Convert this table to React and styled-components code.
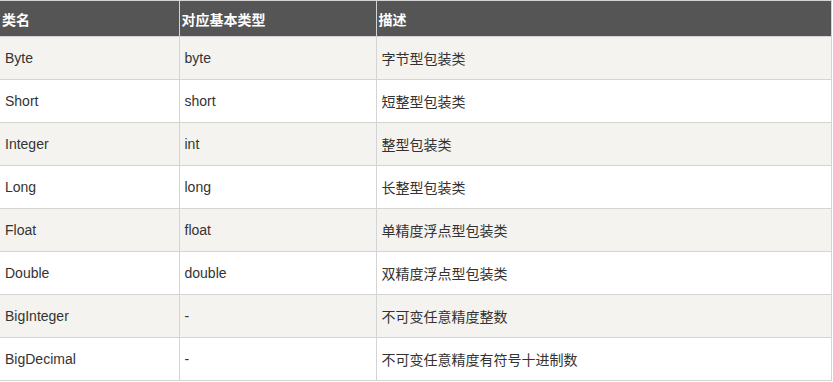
import React from "react";
import styled, { createGlobalStyle } from "styled-components";

const Global = createGlobalStyle`
  html, body { margin: 0; padding: 0; background: #fff; }
  body { font-family: "Liberation Sans", Arial, "Noto Sans CJK SC", sans-serif; }
`;

const Table = styled.table`
  border-collapse: collapse;
  table-layout: fixed;
  width: 832px;
  font-size: 14px;
  color: #333;
`;

const HeadCell = styled.th`
  background: #555;
  color: #fff;
  font-weight: bold;
  text-align: left;
  padding: 0 2px;
  height: 35px;
  border: 1px solid #d4d4d4;
  &:first-child { border-left: none; }
`;

const Row = styled.tr`
  background: ${(p) => (p.$alt ? "#f4f3ef" : "#fff")};
`;

const Cell = styled.td`
  padding: 0 5px;
  height: 42px;
  border: 1px solid #d4d4d4;
  vertical-align: middle;
  &:first-child { border-left: none; }
`;

const rows = [
  ["Byte", "byte", "字节型包装类"],
  ["Short", "short", "短整型包装类"],
  ["Integer", "int", "整型包装类"],
  ["Long", "long", "长整型包装类"],
  ["Float", "float", "单精度浮点型包装类"],
  ["Double", "double", "双精度浮点型包装类"],
  ["BigInteger", "-", "不可变任意精度整数"],
  ["BigDecimal", "-", "不可变任意精度有符号十进制数"],
];

export default function App() {
  return (
    <>
      <Global />
      <Table>
        <colgroup>
          <col style={{ width: 179 }} />
          <col style={{ width: 197 }} />
          <col />
        </colgroup>
        <thead>
          <tr>
            <HeadCell>类名</HeadCell>
            <HeadCell>对应基本类型</HeadCell>
            <HeadCell>描述</HeadCell>
          </tr>
        </thead>
        <tbody>
          {rows.map((r, i) => (
            <Row key={r[0]} $alt={i % 2 === 0}>
              <Cell>{r[0]}</Cell>
              <Cell>{r[1]}</Cell>
              <Cell>{r[2]}</Cell>
            </Row>
          ))}
        </tbody>
      </Table>
    </>
  );
}
